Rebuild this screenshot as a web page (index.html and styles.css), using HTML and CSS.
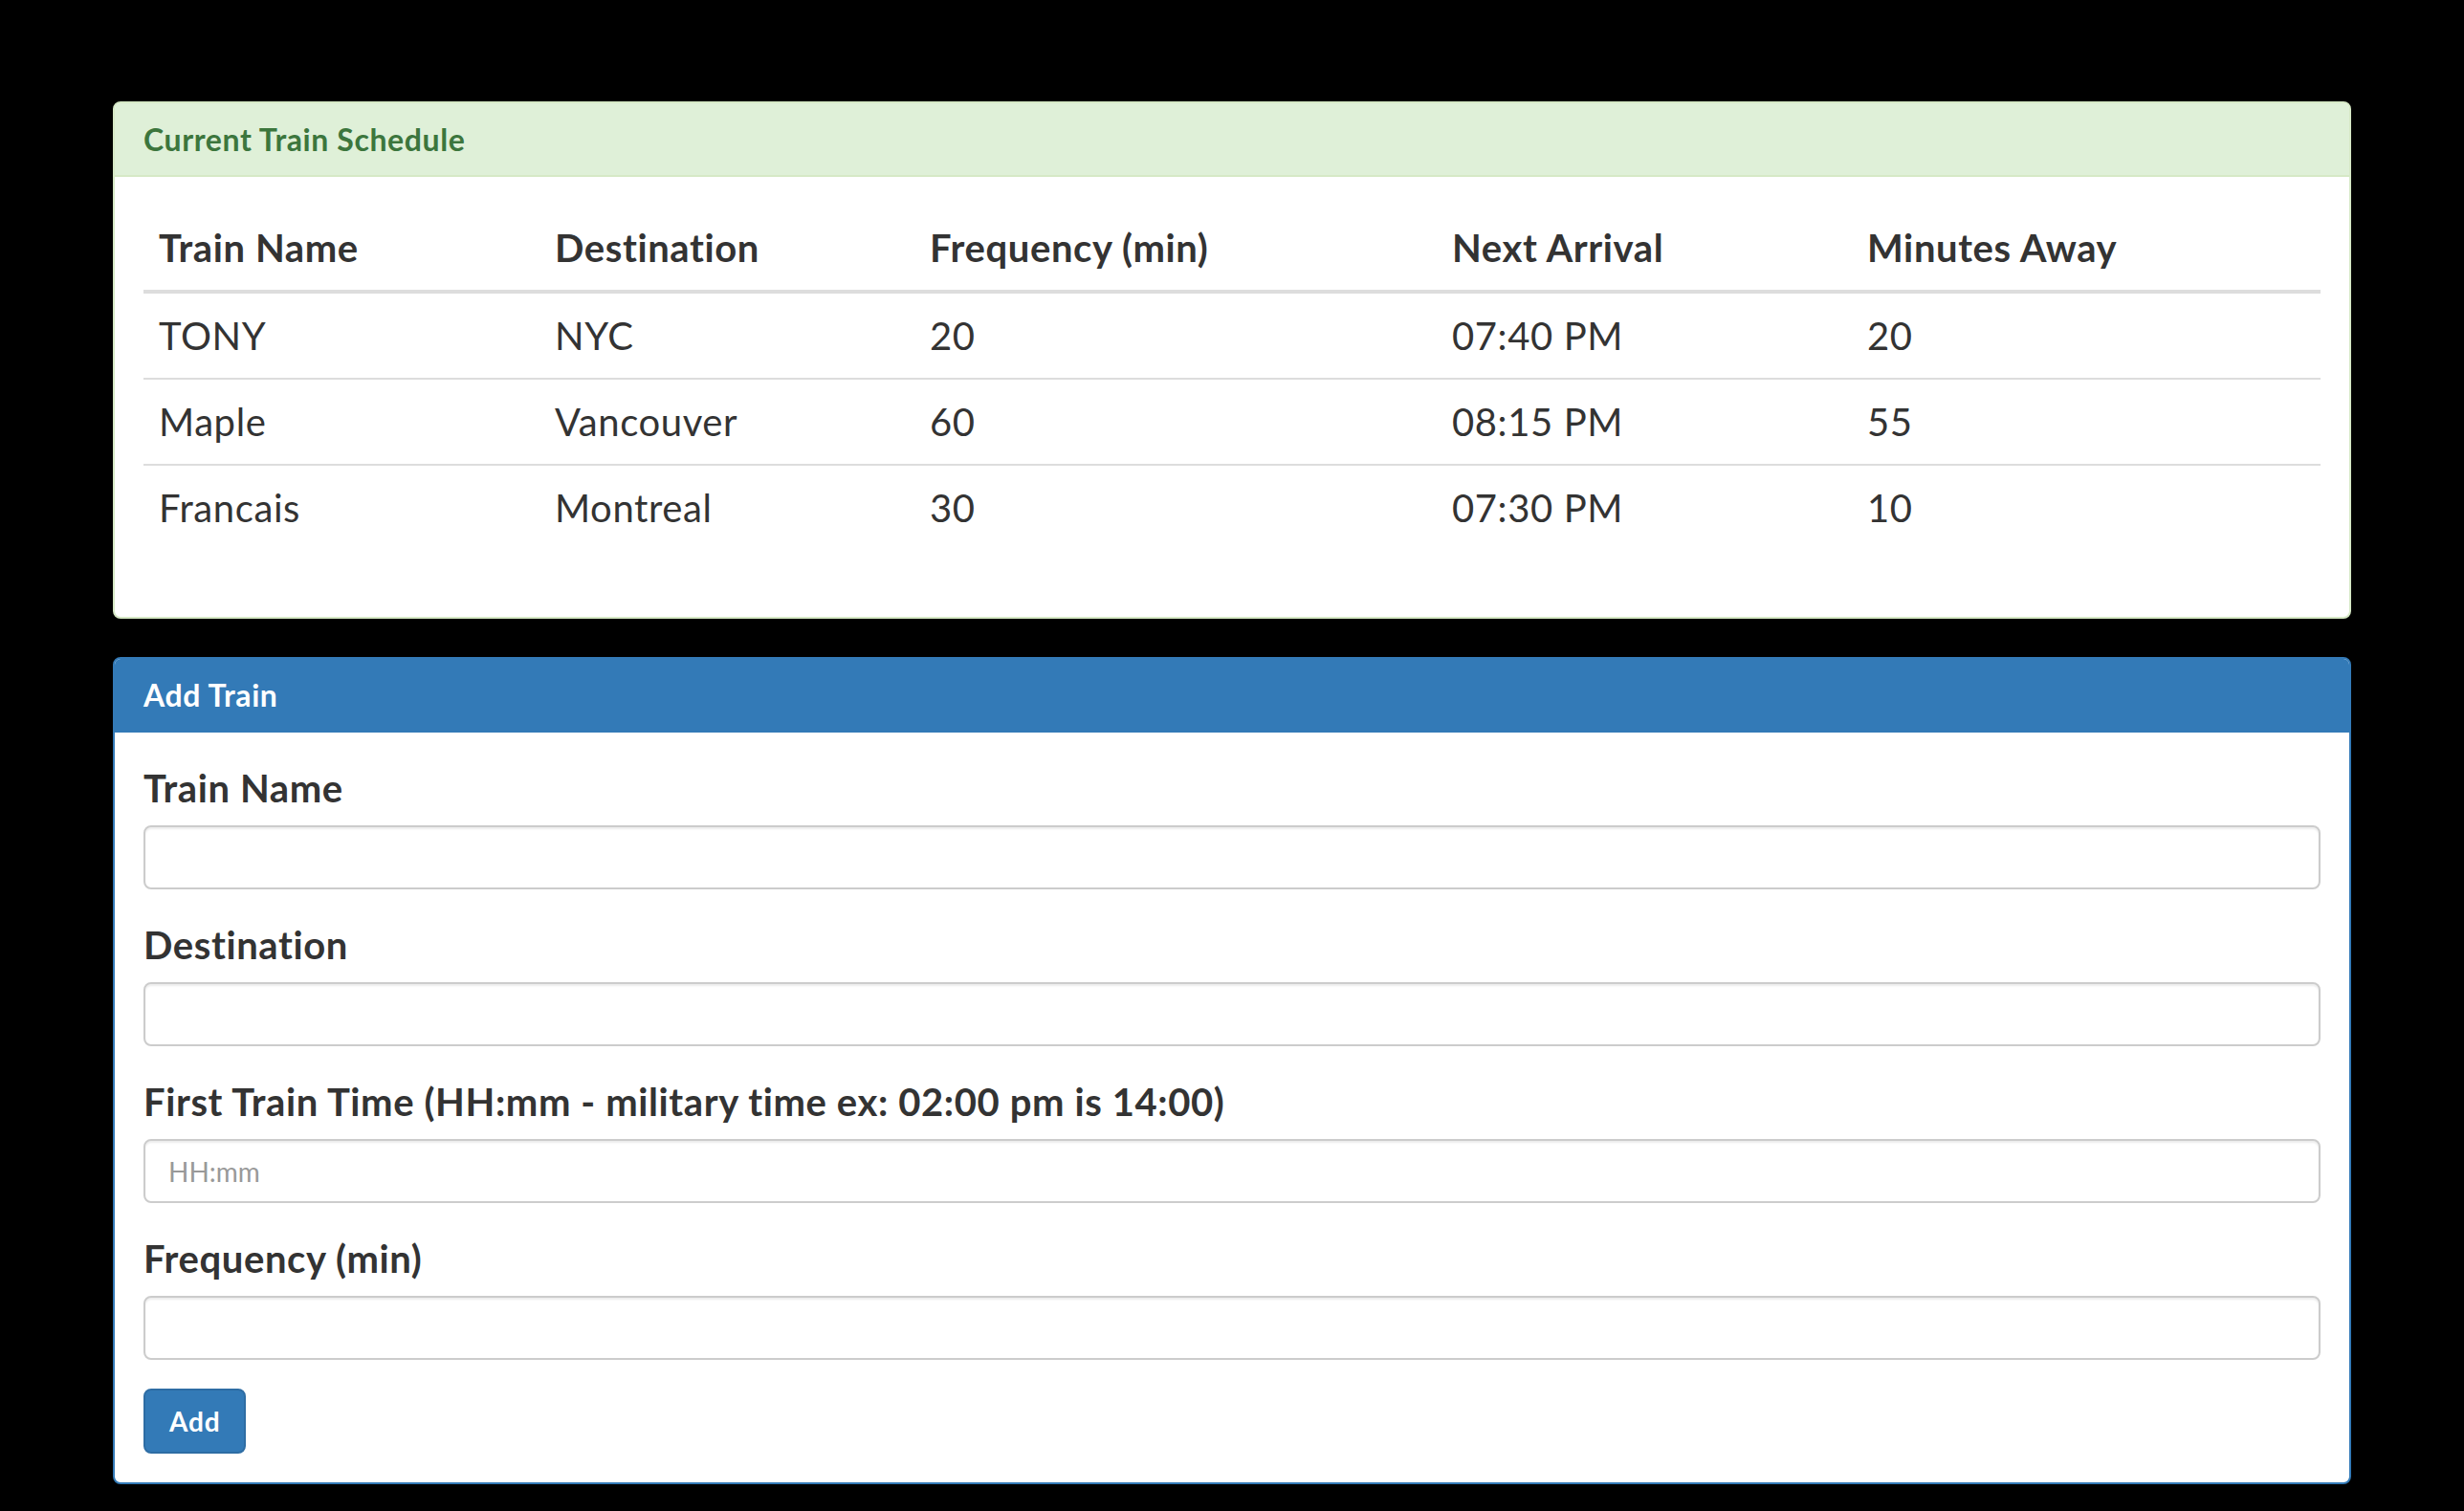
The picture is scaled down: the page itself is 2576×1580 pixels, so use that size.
FILE: index.html
```html
<!DOCTYPE html>
<html lang="en">
<head>
<meta charset="utf-8">
<title>Train Schedule</title>
<link rel="stylesheet" href="styles.css">
</head>
<body>
<div class="container">
  <div class="panel panel-success">
    <div class="panel-heading"><h3 class="panel-title">Current Train Schedule</h3></div>
    <div class="panel-body">
      <table class="table">
        <colgroup>
          <col class="c1"><col class="c2"><col class="c3"><col class="c4"><col class="c5">
        </colgroup>
        <thead>
          <tr><th>Train Name</th><th>Destination</th><th>Frequency (min)</th><th>Next Arrival</th><th>Minutes Away</th></tr>
        </thead>
        <tbody>
          <tr><td>TONY</td><td>NYC</td><td>20</td><td>07:40 PM</td><td>20</td></tr>
          <tr><td>Maple</td><td>Vancouver</td><td>60</td><td>08:15 PM</td><td>55</td></tr>
          <tr><td>Francais</td><td>Montreal</td><td>30</td><td>07:30 PM</td><td>10</td></tr>
        </tbody>
      </table>
    </div>
  </div>
  <div class="panel panel-primary">
    <div class="panel-heading"><h3 class="panel-title">Add Train</h3></div>
    <div class="panel-body">
      <form>
        <div class="form-group">
          <label for="train-name">Train Name</label>
          <input class="form-control" id="train-name" type="text">
        </div>
        <div class="form-group">
          <label for="destination">Destination</label>
          <input class="form-control" id="destination" type="text">
        </div>
        <div class="form-group">
          <label for="first-time">First Train Time (HH:mm - military time ex: 02:00 pm is 14:00)</label>
          <input class="form-control" id="first-time" type="text" placeholder="HH:mm">
        </div>
        <div class="form-group">
          <label for="frequency">Frequency (min)</label>
          <input class="form-control" id="frequency" type="text">
        </div>
        <button class="btn btn-primary" type="submit">Add</button>
      </form>
    </div>
  </div>
</div>
</body>
</html>
```

FILE: styles.css
```css
* { box-sizing: border-box; }
html, body { margin: 0; padding: 0; }
body {
  background: #000;
  color: #333;
  font-family: "Lato", "Noto Sans", sans-serif;
  font-size: 40px;
  line-height: 57px;
  letter-spacing: 0.015em;
}
.container {
  width: 2340px;
  margin: 0 auto;
  padding-top: 106px;
}
.panel {
  background: #fff;
  border: 2px solid transparent;
  border-radius: 8px;
  margin-bottom: 40px;
}
.panel-heading {
  padding: 20px 30px;
  border-bottom: 2px solid transparent;
  border-radius: 6px 6px 0 0;
}
.panel-title {
  margin: 0;
  font-size: 32px;
  line-height: 35px;
  font-weight: 700;
}
.panel-success { border-color: #d6e9c6; }
.panel-success .panel-heading { background: #dff0d8; border-bottom-color: #d6e9c6; color: #3c763d; }
.panel-primary { border-color: #337ab7; }
.panel-primary .panel-heading { background: #337ab7; border-bottom-color: #337ab7; color: #fff; }
.panel-body { padding: 30px; }

.table {
  width: 100%;
  border-collapse: collapse;
  border-spacing: 0;
  margin-bottom: 40px;
}
.c1 { width: 414px; }
.c2 { width: 392px; }
.c3 { width: 546px; }
.c4 { width: 434px; }
.c5 { width: 490px; }
.table th, .table td {
  padding: 16px;
  text-align: left;
  line-height: 56px;
}
.table th {
  font-weight: 700;
  vertical-align: bottom;
  border-bottom: 4px solid #ddd;
}
.table td {
  font-weight: 400;
  vertical-align: top;
  border-top: 2px solid #ddd;
}

.form-group { margin-bottom: 30px; }
label {
  display: inline-block;
  margin-bottom: 10px;
  font-weight: 700;
}
.form-control {
  display: block;
  width: 100%;
  height: 67px;
  padding: 12px 24px;
  font-family: inherit;
  font-size: 28px;
  line-height: 40px;
  color: #555;
  background: #fff;
  border: 2px solid #ccc;
  border-radius: 8px;
  box-shadow: inset 0 2px 2px rgba(0,0,0,.075);
}
.form-control::placeholder { color: #999; }
.btn {
  display: inline-block;
  padding: 12px 25px;
  font-family: inherit;
  font-size: 28px;
  line-height: 40px;
  font-weight: 700;
  letter-spacing: 0.03em;
  border: 2px solid transparent;
  border-radius: 8px;
  cursor: pointer;
}
.btn-primary {
  color: #fff;
  background: #337ab7;
  border-color: #2e6da4;
}
```
